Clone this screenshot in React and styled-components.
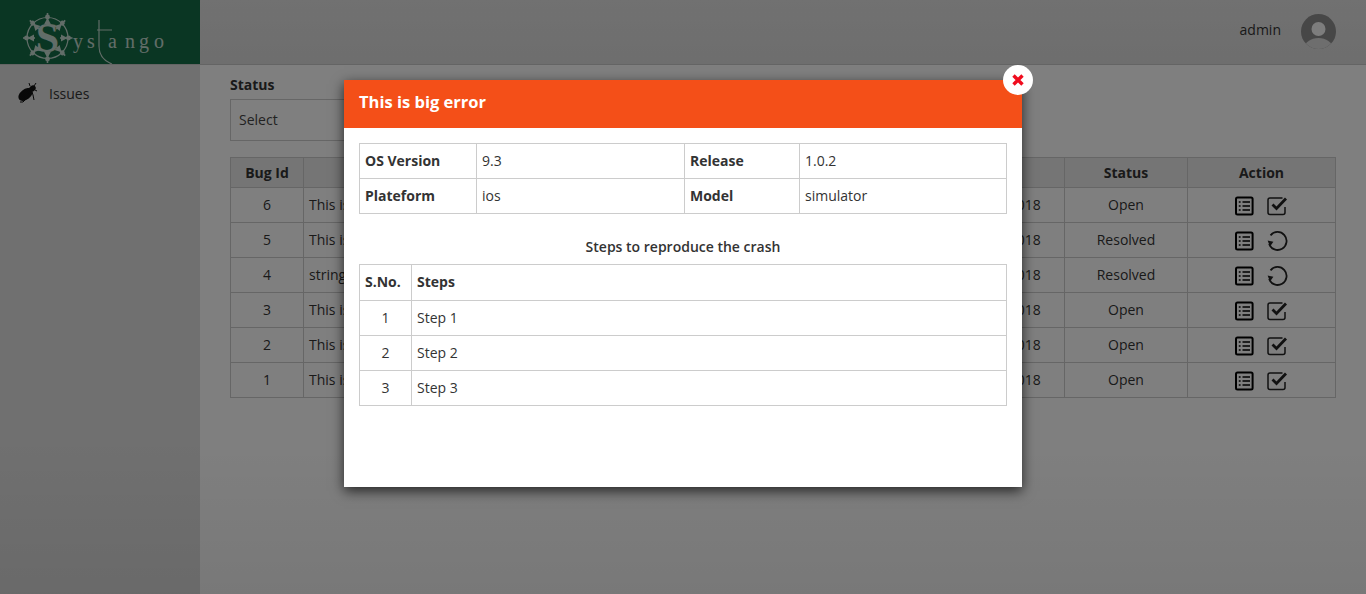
import React from "react";
import styled, { createGlobalStyle } from "styled-components";

const Global = createGlobalStyle`
  html, body { margin: 0; padding: 0; height: 100%; overflow: hidden; }
  body { font-family: "Open Sans", "Noto Sans", sans-serif; font-size: 14px; color: #333; background: #fff; }
  * { box-sizing: border-box; }
`;
const Page = styled.div`position: relative; width: 1366px; height: 594px; overflow: hidden; background: #fff;`;
const Header = styled.header`display: flex; height: 65px; background: linear-gradient(#e2e2e2, #dcdcdc); border-bottom: 1px solid #c8c8c8;`;
const Brand = styled.div`width: 200px; height: 64px; background: #146c46; padding: 13px 0 0 23px; flex: none;`;
const UserBar = styled.div`flex: 1; display: flex; align-items: center; justify-content: flex-end; gap: 20px; padding-right: 30px;`;
const UserName = styled.span`font-size: 14px; color: #333; margin-top: -5px;`;
const Avatar = styled.svg`width: 35px; height: 35px; margin-top: -2px;`;
const Main = styled.div`display: flex; height: 529px;`;
const Sidebar = styled.nav`width: 200px; flex: none; background: #e0e0e0; padding: 16px 0 0 17px;`;
const NavItem = styled.div`display: flex; align-items: center; gap: 11px; font-size: 14px; color: #333; height: 24px;`;
const Content = styled.main`flex: 1; padding: 12px 30px 0;`;
const Label = styled.div`font-weight: 700; font-size: 14px; line-height: 16px; color: #333; margin-bottom: 6px;`;
const SelectBox = styled.div`width: 260px; height: 42px; border: 1px solid #ccc; padding: 0 8px 2px; display: flex; align-items: center; font-size: 14px; color: #444; margin-bottom: 16px;`;
const BugTable = styled.table`width: 1105px; border-collapse: collapse; table-layout: fixed; font-size: 14px; color: #333;`;
const BugHead = styled.th`height: 30px; padding: 0 5px; background: #eaeaea; border: 1px solid #ccc; font-weight: 700; text-align: center;`;
const BugCell = styled.td`height: 35px; padding: 0 5px 2px; border: 1px solid #ccc; text-align: ${p => p.$left ? "left" : "center"};`;
const DateText = styled.span`margin-left: -2px;`;
const Icons = styled.div`display: flex; justify-content: center; gap: 13px; align-items: center; padding: 2px 0 0 0; margin-bottom: -2px;`;
const Backdrop = styled.div`position: absolute; inset: 0; background: linear-gradient(rgba(0, 0, 0, .5) 75%, rgba(0, 0, 0, .53));`;
const Modal = styled.div`position: absolute; left: 344px; top: 80px; width: 678px; height: 407px; background: #fff; box-shadow: 0 4px 12px rgba(0, 0, 0, .7);`;
const ModalHeader = styled.div`height: 48px; background: #f44f18; color: #fff; font-weight: 700; font-size: 16.5px; line-height: 44px; padding-left: 15px;`;
const ModalBody = styled.div`padding: 15px;`;
const InfoTable = styled.table`width: ${p => p.$w || 647}px; border-collapse: collapse; table-layout: fixed; font-size: 14px; color: #333;`;
const Row = styled.tr`height: ${p => p.$h || 35}px;`;
const Cell = styled.td`border: 1px solid #ccc; padding: 0 5px 2px; font-weight: ${p => p.$b ? 700 : 400}; text-align: ${p => p.$c ? "center" : "left"};`;
const StepsTitle = styled.div`font-weight: 600; font-size: 14px; text-align: center; line-height: 18px; margin: 24px 0 8px;`;
const Close = styled.button`position: absolute; right: -11px; top: -15px; width: 30px; height: 30px; border-radius: 50%; border: 0; padding: 0; background: #fff; display: flex; align-items: center; justify-content: center;`;

const ListIcon = () => (
  <svg width="19" height="20" viewBox="0 0 19 20" fill="none" stroke="#000" strokeWidth="2">
    <rect x="1" y="1.5" width="16.6" height="17" rx="1.5" />
    <path d="M7.5 6h7.5M7.5 10h7.5M7.5 14h7.5" strokeWidth="1.7" />
    <path d="M3.8 6h1.8M3.8 10h1.8M3.8 14h1.8" strokeWidth="1.7" />
  </svg>
);
const CheckIcon = () => (
  <svg width="21" height="20" viewBox="0 0 21 20" fill="none" stroke="#222">
    <path d="M18 11v5.5a2 2 0 0 1-2 2H3a2 2 0 0 1-2-2V4a2 2 0 0 1 2-2h12.5" strokeWidth="1.5" />
    <path d="M5.5 8.5l4 4L19 2.5" strokeWidth="2.8" />
  </svg>
);
const RedoIcon = () => (
  <svg width="21" height="20" viewBox="0 0 21 20" fill="none" stroke="#222">
    <path d="M3.5 4.4A9 9 0 1 1 2.1 13" strokeWidth="1.8" />
    <path d="M.6 9.6l5.8 1.2-3.4 4.6z" fill="#222" stroke="none" />
  </svg>
);
const Spokes = () => {
  const items = [];
  for (let i = 0; i < 8; i++) {
    const a = i * 45;
    items.push(
      <g key={i} transform={`rotate(${a} 24.5 25)`}>
        <path d="M24.5 0v13" stroke="#fff" strokeWidth="1.6" />
        <circle cx="24.5" cy="4" r="2.4" fill="#fff" />
        <path d="M24.5 5l-3.6 6.5h7.2z" fill="#fff" />
      </g>
    );
  }
  return items;
};
const Logo = () => (
  <svg width="142" height="51" viewBox="0 0 142 51" fill="#fff" style={{ display: "block", opacity: .75 }}>
    <circle cx="24.5" cy="25" r="20.5" fill="none" stroke="#fff" strokeWidth="1.2" />
    <Spokes />
    <circle cx="24.5" cy="25" r="12.5" fill="#146c46" />
    <text x="24.5" y="39" textAnchor="middle" fontFamily="Liberation Serif, serif" fontWeight="700" fontSize="42">S</text>
    <text x="50 64" y="35" fontFamily="Liberation Serif, serif" fontSize="20">ys</text>
    <path d="M76 7v26q0 13 13 18M74 17h15" fill="none" stroke="#fff" strokeWidth="1.2" />
    <text x="85 102 116 131" y="35" fontFamily="Liberation Serif, serif" fontSize="20">ango</text>
  </svg>
);
const Beetle = () => (
  <svg width="21" height="20" viewBox="0 0 21 20" fill="#111">
    <ellipse cx="8.5" cy="11.5" rx="5.2" ry="8" transform="rotate(52 8.5 11.5)" />
    <ellipse cx="15.5" cy="5.5" rx="3.4" ry="2.8" transform="rotate(-40 15.5 5.5)" />
    <path d="M17 3l2-3M18 7l2 1M13 3l-1-3M15 9l1 3 1 5M8 17l-2 2-3 0" stroke="#111" strokeWidth="1" fill="none" />
  </svg>
);

const rows = [
  [6, "This is big error", "Open", true],
  [5, "This is big error", "Resolved", false],
  [4, "string", "Resolved", false],
  [3, "This is big error", "Open", true],
  [2, "This is big error", "Open", true],
  [1, "This is big error", "Open", true],
];

export default function App() {
  return (
    <Page>
      <Global />
      <Header>
        <Brand><Logo /></Brand>
        <UserBar>
          <UserName>admin</UserName>
          <Avatar viewBox="0 0 35 35">
            <circle cx="17.5" cy="17.5" r="17.5" fill="#8e8e8e" />
            <clipPath id="av"><circle cx="17.5" cy="17.5" r="17.5" /></clipPath>
            <g clipPath="url(#av)">
              <circle cx="17.5" cy="15" r="7" fill="#fafafa" />
              <ellipse cx="17.5" cy="34" rx="14" ry="10" fill="#dcdcdc" />
            </g>
          </Avatar>
        </UserBar>
      </Header>
      <Main>
        <Sidebar>
          <NavItem><Beetle />Issues</NavItem>
        </Sidebar>
        <Content>
          <Label>Status</Label>
          <SelectBox>Select</SelectBox>
          <BugTable>
            <colgroup>
              <col style={{ width: 73 }} /><col style={{ width: 641 }} /><col style={{ width: 120 }} />
              <col style={{ width: 123 }} /><col style={{ width: 148 }} />
            </colgroup>
            <thead>
              <tr>
                <BugHead>Bug Id</BugHead><BugHead>Title</BugHead><BugHead>Date</BugHead>
                <BugHead>Status</BugHead><BugHead>Action</BugHead>
              </tr>
            </thead>
            <tbody>
              {rows.map(([id, title, status, open]) => (
                <tr key={id}>
                  <BugCell>{id}</BugCell>
                  <BugCell $left>{title}</BugCell>
                  <BugCell><DateText>12/03/2018</DateText></BugCell>
                  <BugCell>{status}</BugCell>
                  <BugCell><Icons><ListIcon />{open ? <CheckIcon /> : <RedoIcon />}</Icons></BugCell>
                </tr>
              ))}
            </tbody>
          </BugTable>
        </Content>
      </Main>
      <Backdrop />
      <Modal>
        <Close aria-label="close">
          <svg width="12" height="12" viewBox="0 0 12 12" stroke="#f00c1e" strokeWidth="3.4"><path d="M1.5 1.5l9 9M10.5 1.5l-9 9" /></svg>
        </Close>
        <ModalHeader>This is big error</ModalHeader>
        <ModalBody>
          <InfoTable>
            <colgroup>
              <col style={{ width: 117 }} /><col style={{ width: 208 }} /><col style={{ width: 115 }} /><col style={{ width: 207 }} />
            </colgroup>
            <tbody>
              <Row><Cell $b>OS Version</Cell><Cell>9.3</Cell><Cell $b>Release</Cell><Cell>1.0.2</Cell></Row>
              <Row><Cell $b>Plateform</Cell><Cell>ios</Cell><Cell $b>Model</Cell><Cell>simulator</Cell></Row>
            </tbody>
          </InfoTable>
          <StepsTitle>Steps to reproduce the crash</StepsTitle>
          <InfoTable $w={648}>
            <colgroup><col style={{ width: 52 }} /><col /></colgroup>
            <tbody>
              <Row $h={36}><Cell $b>S.No.</Cell><Cell $b>Steps</Cell></Row>
              {[1, 2, 3].map(n => (
                <Row key={n}><Cell $c>{n}</Cell><Cell>Step {n}</Cell></Row>
              ))}
            </tbody>
          </InfoTable>
        </ModalBody>
      </Modal>
    </Page>
  );
}
